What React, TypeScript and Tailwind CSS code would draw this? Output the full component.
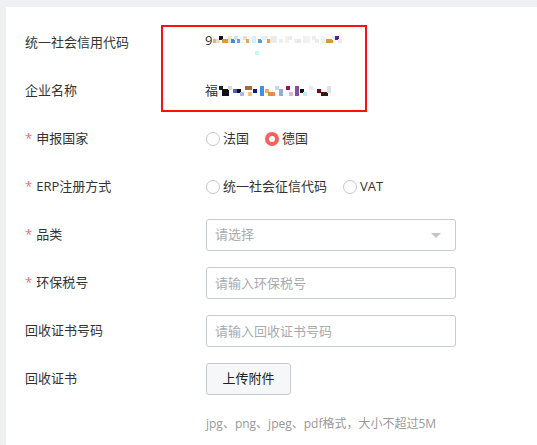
import React from "react"

const font = { fontFamily: '"Open Sans", "Noto Sans CJK SC", sans-serif' }

type Cell = [number, number, number, number, string]

// blurred-out values in the red box
const codeCells: Cell[] = [
  [0, 3, 3, 3, "#e9b070"],
  [3, 3, 3, 3, "#f6d8d0"],
  [6, 0, 3, 3, "#151515"],
  [9, 3, 6, 3, "#d99a3c"],
  [15, 0, 3, 6, "#f4e6c8"],
  [18, 3, 3, 3, "#3c8fd8"],
  [21, 0, 3, 3, "#c8e8f8"],
  [24, 3, 3, 3, "#5aa6e6"],
  [27, 0, 3, 6, "#eef6fa"],
  [30, 0, 3, 3, "#f4dcc0"],
  [33, 3, 3, 3, "#e6a45c"],
  [36, 0, 3, 6, "#f0f8fc"],
  [39, 0, 3, 6, "#d0f2fc"],
  [45, 3, 3, 3, "#4aa0e0"],
  [48, 0, 3, 3, "#e6f2fa"],
  [51, 0, 3, 3, "#ececec"],
  [54, 3, 3, 3, "#e0a050"],
  [57, 0, 3, 6, "#f6eadc"],
  [60, 0, 3, 6, "#e4eef4"],
  [66, 3, 3, 3, "#eeeeee"],
  [72, 0, 3, 6, "#f2f2f2"],
  [75, 0, 3, 3, "#ececec"],
  [81, 3, 3, 3, "#f0f0f0"],
  [84, 3, 3, 3, "#e8e8e8"],
  [90, 0, 3, 6, "#f0f0f0"],
  [93, 0, 3, 6, "#f2f2f2"],
  [99, 0, 3, 3, "#eeeeee"],
  [102, 3, 3, 3, "#ececec"],
  [108, 0, 3, 6, "#f2f2f2"],
  [113, 3, 6, 3, "#d99a3c"],
  [119, 0, 3, 3, "#f0ecf4"],
  [122, 0, 3, 3, "#5a2090"],
  [125, 3, 3, 3, "#f0e8f4"],
  [42, 15, 3, 3, "#c8f6fc"]
]

const nameCells: Cell[] = [
  [0, 0, 3, 3, "#222"],
  [3, 3, 6, 6, "#111"],
  [9, 0, 3, 3, "#d8d8ec"],
  [14, 3, 3, 3, "#5060c0"],
  [18, 3, 3, 3, "#111"],
  [21, 6, 3, 3, "#b0b8e0"],
  [26, 0, 6, 3, "#b06830"],
  [29, 6, 3, 3, "#f0c080"],
  [34, 3, 3, 3, "#0a1a90"],
  [41, 0, 3, 9, "#4090e0"],
  [46, 3, 3, 3, "#f0b060"],
  [49, 6, 6, 3, "#e09040"],
  [56, 0, 3, 3, "#c0d8f0"],
  [60, 3, 3, 6, "#a0a8d8"],
  [67, 0, 3, 3, "#9a1060"],
  [70, 6, 3, 3, "#d8b8d8"],
  [76, 0, 3, 9, "#8050a0"],
  [81, 3, 3, 3, "#111"],
  [84, 6, 3, 3, "#b8f0f8"],
  [90, 0, 3, 3, "#e8e8f0"],
  [98, 3, 3, 3, "#8a0010"],
  [102, 6, 6, 3, "#3a1a0a"],
  [108, 0, 3, 6, "#e0e0e8"]
]

function Mosaic({ cells, w, h }: { cells: Cell[]; w: number; h: number }) {
  return (
    <svg width={w} height={h} viewBox={`0 0 ${w} ${h}`} className="block">
      {cells.map(([x, y, cw, ch, c], i) => (
        <rect key={i} x={x} y={y} width={cw + 1} height={ch + 1} fill={c} />
      ))}
    </svg>
  )
}

function Label({ text, required }: { text: string; required?: boolean }) {
  return (
    <div className="w-[181px] shrink-0 text-[13px] text-[#333]">
      {required && <span className="text-[#f56c6c] mr-[4px]">*</span>}
      {text}
    </div>
  )
}

function Radio({ label, checked }: { label: string; checked?: boolean }) {
  return (
    <label className="flex items-center mr-[16px] text-[13px] text-[#333]">
      {checked ? (
        <span className="w-[14px] h-[14px] rounded-full bg-[#f4625f] flex items-center justify-center">
          <span className="w-[6px] h-[6px] rounded-full bg-white" />
        </span>
      ) : (
        <span className="w-[14px] h-[14px] rounded-full border border-[#c3c7cf] bg-white" />
      )}
      <span className="ml-[3px]">{label}</span>
    </label>
  )
}

function TextInput({ placeholder }: { placeholder: string }) {
  return (
    <input
      placeholder={placeholder}
      style={font}
      className="w-[250px] h-8 border border-[#c6cad2] rounded-[3px] px-[8px] text-[13px] outline-none placeholder:text-[#a9abb0]"
    />
  )
}

export default function App() {
  return (
    <div style={font} className="min-h-screen bg-[#eef0f4] pt-[7px] pl-[6px]">
      <div className="relative bg-white min-h-[438px] pt-[20px] pl-[19px]">
        <div className="flex items-center h-8 mb-4">
          <Label text="统一社会信用代码" />
          <div className="flex items-start text-[13px] text-[#333] -ml-[1px]">
            <span>9</span>
            <div className="ml-[1px] mt-[5px]">
              <Mosaic cells={codeCells} w={130} h={20} />
            </div>
          </div>
        </div>
        <div className="flex items-center h-8 mb-4">
          <Label text="企业名称" />
          <div className="flex items-center text-[13px] text-[#333] -ml-[1px]">
            <span>福</span>
            <div className="ml-[1px]">
              <Mosaic cells={nameCells} w={112} h={10} />
            </div>
          </div>
        </div>
        <div className="flex items-center h-8 mb-4">
          <Label text="申报国家" required />
          <Radio label="法国" />
          <Radio label="德国" checked />
        </div>
        <div className="flex items-center h-8 mb-4">
          <Label text="ERP注册方式" required />
          <Radio label="统一社会征信代码" />
          <Radio label="VAT" />
        </div>
        <div className="flex items-center h-8 mb-4">
          <Label text="品类" required />
          <div className="w-[250px] h-8 border border-[#c6cad2] rounded-[3px] pl-[8px] pr-[14px] flex items-center justify-between text-[13px] text-[#a9abb0]">
            <span>请选择</span>
            <span className="w-0 h-0 border-l-[5px] border-r-[5px] border-t-[5px] border-l-transparent border-r-transparent border-t-[#c0c4cc]" />
          </div>
        </div>
        <div className="flex items-center h-8 mb-4">
          <Label text="环保税号" required />
          <TextInput placeholder="请输入环保税号" />
        </div>
        <div className="flex items-center h-8 mb-4">
          <Label text="回收证书号码" />
          <TextInput placeholder="请输入回收证书号码" />
        </div>
        <div className="flex items-center h-8">
          <Label text="回收证书" />
          <button
            style={font}
            className="w-[85px] h-8 border border-[#c6cad2] rounded-[3px] bg-[#f6f7f9] text-[13px] text-[#222]"
          >
            上传附件
          </button>
        </div>
        <div className="pl-[181px] mt-[20px] text-[12px] leading-[18px] text-[#999]">
          jpg、png、jpeg、pdf格式，大小不超过5M
        </div>
        <div className="absolute left-[155px] top-[18px] w-[206px] h-[87px] border-2 border-[#ff1010]" />
      </div>
    </div>
  )
}
